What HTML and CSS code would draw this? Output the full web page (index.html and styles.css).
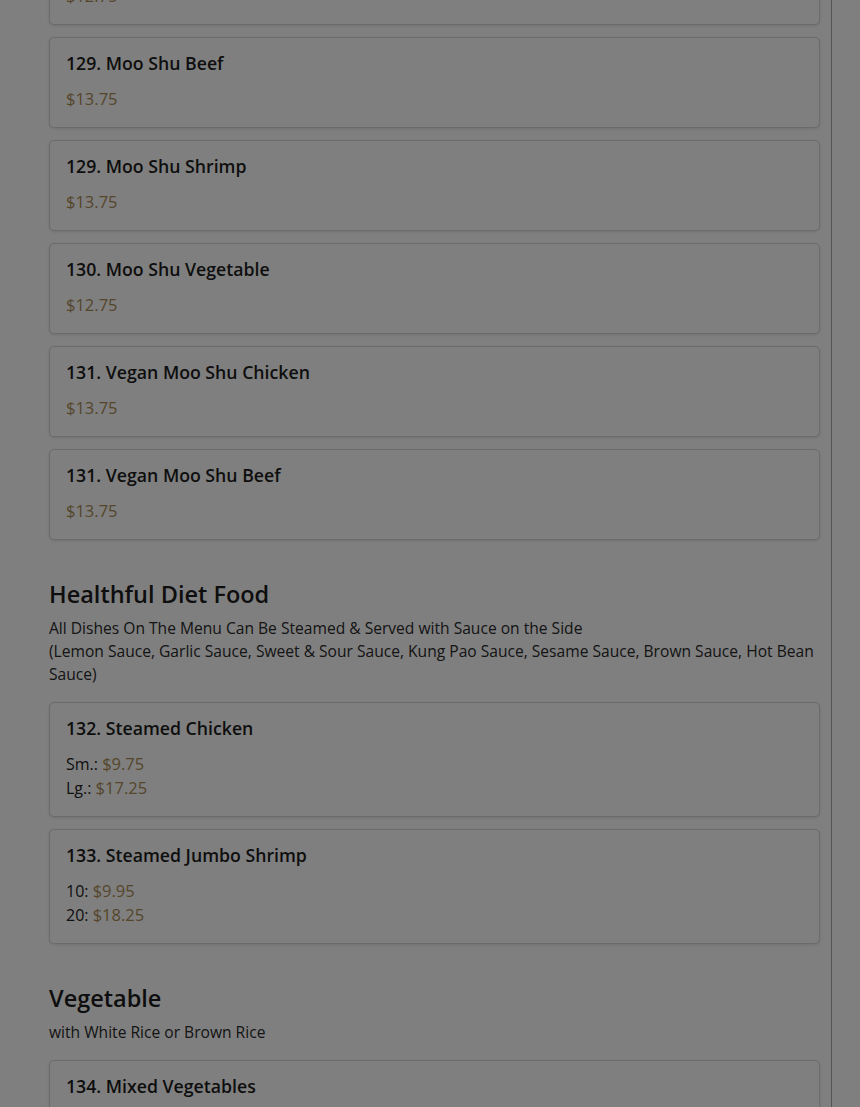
FILE: index.html
```html
<!DOCTYPE html>
<html lang="en">
<head>
<meta charset="utf-8">
<title>Menu</title>
<link rel="stylesheet" href="styles.css">
</head>
<body>
<div class="main">
  <div class="card">
    <div class="item-title">128. Moo Shu Pork</div>
    <div class="price-line"><span class="price">$12.75</span></div>
  </div>
  <div class="card">
    <div class="item-title">129. Moo Shu Beef</div>
    <div class="price-line"><span class="price">$13.75</span></div>
  </div>
  <div class="card">
    <div class="item-title">129. Moo Shu Shrimp</div>
    <div class="price-line"><span class="price">$13.75</span></div>
  </div>
  <div class="card">
    <div class="item-title">130. Moo Shu Vegetable</div>
    <div class="price-line"><span class="price">$12.75</span></div>
  </div>
  <div class="card">
    <div class="item-title">131. Vegan Moo Shu Chicken</div>
    <div class="price-line"><span class="price">$13.75</span></div>
  </div>
  <div class="card">
    <div class="item-title">131. Vegan Moo Shu Beef</div>
    <div class="price-line"><span class="price">$13.75</span></div>
  </div>

  <section class="section">
    <h2 class="section-title">Healthful Diet Food</h2>
    <p class="section-desc">All Dishes On The Menu Can Be Steamed &amp; Served with Sauce on the Side<br>(Lemon Sauce, Garlic Sauce, Sweet &amp; Sour Sauce, Kung Pao Sauce, Sesame Sauce, Brown Sauce, Hot Bean Sauce)</p>
  </section>
  <div class="card">
    <div class="item-title">132. Steamed Chicken</div>
    <div class="price-line">Sm.: <span class="price">$9.75</span></div>
    <div class="price-line">Lg.: <span class="price">$17.25</span></div>
  </div>
  <div class="card">
    <div class="item-title">133. Steamed Jumbo Shrimp</div>
    <div class="price-line">10: <span class="price">$9.95</span></div>
    <div class="price-line">20: <span class="price">$18.25</span></div>
  </div>

  <section class="section">
    <h2 class="section-title">Vegetable</h2>
    <p class="section-desc">with White Rice or Brown Rice</p>
  </section>
  <div class="card">
    <div class="item-title">134. Mixed Vegetables</div>
    <div class="price-line"><span class="price">$12.75</span></div>
  </div>
</div>
<div class="backdrop"></div>
</body>
</html>
```
FILE: styles.css
```css
html, body {
  margin: 0;
  padding: 0;
  background: #ffffff;
  overflow: hidden;
  height: 1107px;
}
body {
  font-family: "Open Sans", "Noto Sans", sans-serif;
  color: #222222;
}
.main {
  box-sizing: border-box;
  width: 832px;
  margin-top: -66px;
  padding: 0 11px 0 49px;
  border-right: 1px solid #aaaaaa;
  min-height: 1300px;
}
.card {
  border: 1px solid #d6d6d6;
  border-radius: 5px;
  padding: 12px 16px 16px;
  margin-bottom: 12px;
  box-shadow: 0 1px 3px rgba(0, 0, 0, 0.12);
  background: #ffffff;
}
.item-title {
  font-size: 17.7px;
  line-height: 27px;
  font-weight: 600;
  color: #1c1c1c;
  margin-bottom: 10px;
}
.price-line {
  font-size: 16px;
  line-height: 24px;
  color: #222222;
}
.price {
  font-size: 16.5px;
  color: #aa8d55;
}
.section {
  padding-top: 27px;
  margin-bottom: 16px;
}
.section-title {
  margin: 0 0 7px;
  font-size: 23.5px;
  line-height: 31px;
  font-weight: 600;
  color: #1c1c1c;
}
.section-desc {
  margin: 0;
  font-size: 15.6px;
  line-height: 23px;
  color: #2a2a2a;
}
.backdrop {
  position: fixed;
  inset: 0;
  background: rgba(0, 0, 0, 0.5);
}
```
